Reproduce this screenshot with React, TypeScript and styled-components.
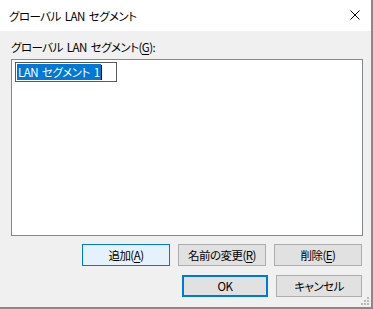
import styled, { createGlobalStyle } from "styled-components";

const GlobalStyle = createGlobalStyle`
  html, body {
    margin: 0;
    padding: 0;
    background: #ffffff;
  }
  body {
    font-family: "Noto Sans CJK JP", "Noto Sans", sans-serif;
    font-size: 11.5px;
    letter-spacing: -0.55px;
    word-spacing: 2px;
    font-feature-settings: "palt";
    color: #000000;
  }
`;

const Window = styled.div`
  width: 373px;
  height: 309px;
  box-sizing: border-box;
  border-right: 2px solid #888888;
  border-bottom: 2px solid #888888;
  display: flex;
  flex-direction: column;
  background: #f0f0f0;
  position: relative;
`;

const TitleBar = styled.div`
  height: 31px;
  flex-shrink: 0;
  background: #ffffff;
  display: flex;
  align-items: center;
  justify-content: space-between;
  padding: 0 11px 0 9px;
  line-height: 16px;
`;

const CloseButton = styled.div`
  width: 10px;
  height: 10px;
  display: flex;
  margin-top: -2px;
`;

const Body = styled.div`
  flex: 1;
  display: flex;
  flex-direction: column;
  padding: 8px 8px 0 11px;
`;

const FieldLabel = styled.div`
  line-height: 16px;
  height: 16px;
  margin-bottom: 4px;
`;

const Key = styled.span`
  text-decoration: underline;
  text-underline-offset: 2px;
`;

const ListBox = styled.div`
  height: 177px;
  box-sizing: border-box;
  border: 1px solid #828790;
  background: #ffffff;
  padding: 2px 3px;
`;

const EditBox = styled.div`
  display: inline-flex;
  align-items: center;
  width: 102px;
  height: 20px;
  box-sizing: border-box;
  border: 1px solid #5a5a5a;
  background: #ffffff;
  padding: 0 1px;
`;

const Selected = styled.span`
  background: #0078d7;
  color: #ffffff;
  line-height: 16px;
  padding: 0 1px;
`;

const Caret = styled.span`
  display: inline-block;
  width: 1px;
  height: 15px;
  background: #000000;
`;

const ButtonRow = styled.div<{ $top: number }>`
  display: flex;
  justify-content: flex-end;
  gap: 8px;
  margin-top: ${p => p.$top}px;
  margin-right: 1px;
`;

const Button = styled.div<{ $width: number; $variant?: "hover" | "default" }>`
  width: ${p => p.$width}px;
  height: 22px;
  box-sizing: border-box;
  display: flex;
  align-items: center;
  justify-content: center;
  line-height: 16px;
  background: ${p => (p.$variant === "hover" ? "#e5f1fb" : "#e1e1e1")};
  border: ${p =>
    p.$variant === "hover"
      ? "1px solid #0078d7"
      : p.$variant === "default"
        ? "2px solid #0078d7"
        : "1px solid #adadad"};
`;

const Grip = styled.svg`
  position: absolute;
  right: 1px;
  bottom: 1px;
`;

export default function App() {
  return (
    <>
      <GlobalStyle />
      <Window>
        <TitleBar>
          <span>グローバル LAN セグメント</span>
          <CloseButton>
            <svg width="10" height="10" viewBox="0 0 10 10">
              <path d="M0.5 0.5 L9.5 9.5 M9.5 0.5 L0.5 9.5" stroke="#000" strokeWidth="1" fill="none" />
            </svg>
          </CloseButton>
        </TitleBar>
        <Body>
          <FieldLabel>
            グローバル LAN セグメント(<Key>G</Key>):
          </FieldLabel>
          <ListBox>
            <EditBox>
              <Selected>LAN セグメント 1</Selected>
              <Caret />
            </EditBox>
          </ListBox>
          <ButtonRow $top={8}>
            <Button $width={88} $variant="hover">
              追加(<Key>A</Key>)
            </Button>
            <Button $width={88}>
              名前の変更(<Key>R</Key>)
            </Button>
            <Button $width={88}>
              削除(<Key>E</Key>)
            </Button>
          </ButtonRow>
          <ButtonRow $top={9}>
            <Button $width={86} $variant="default">
              OK
            </Button>
            <Button $width={86}>キャンセル</Button>
          </ButtonRow>
        </Body>
        <Grip width="9" height="9" viewBox="0 0 9 9">
          <g fill="#b8b8b8">
            <rect x="6" y="0" width="2" height="2" />
            <rect x="3" y="3" width="2" height="2" />
            <rect x="6" y="3" width="2" height="2" />
            <rect x="0" y="6" width="2" height="2" />
            <rect x="3" y="6" width="2" height="2" />
            <rect x="6" y="6" width="2" height="2" />
          </g>
        </Grip>
      </Window>
    </>
  );
}
